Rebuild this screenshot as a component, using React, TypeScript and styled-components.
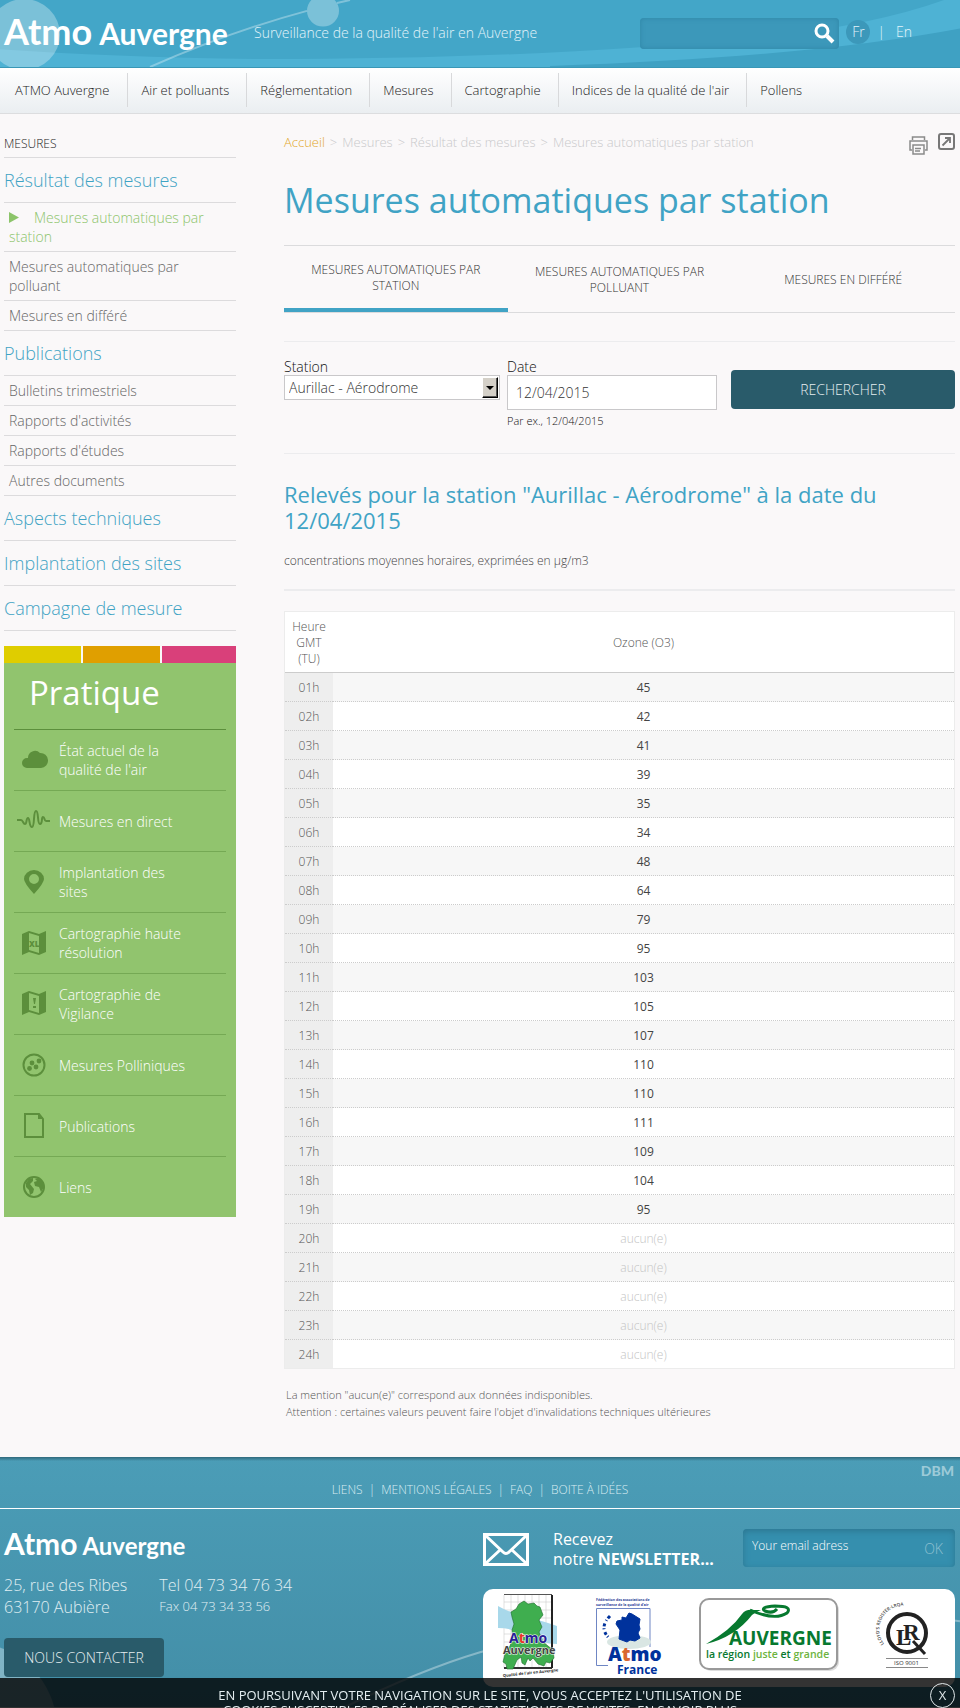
import React from "react";
import styled, { createGlobalStyle } from "styled-components";

const sans = `"Open Sans", "Noto Sans", sans-serif`;
const logoFont = `Lato, "Open Sans", sans-serif`;

const GlobalStyle = createGlobalStyle`
  * { box-sizing: border-box; }
  body { margin: 0; background: #faf8f9; color: #333; font-family: ${sans}; font-size: 14px; font-weight: 300; line-height: 19px; }
  a { color: inherit; text-decoration: none; }
  ul { list-style: none; margin: 0; padding: 0; }
  h1, h2, h3, p { margin: 0; font-weight: inherit; }
  button, input, select { font: inherit; }
  svg { overflow: visible; }
`;

/* ---------- header ---------- */
const Header = styled.header`
  position: relative;
  height: 68px;
  padding: 0 44px 4px 4px;
  display: flex;
  align-items: center;
  background: #43a6c8;
  border-bottom: 1px solid #3997b6;
  overflow: hidden;
`;
const Backdrop = styled.svg`
  position: absolute;
  inset: 0;
  width: 100%;
  height: 100%;
`;
const Logo = styled.a<{ $small?: boolean }>`
  position: relative;
  display: flex;
  align-items: baseline;
  gap: ${(p) => (p.$small ? 5 : 7)}px;
  width: ${(p) => (p.$small ? "auto" : "250px")};
  font-family: ${logoFont};
  font-weight: 700;
  font-size: ${(p) => (p.$small ? 24 : 30)}px;
  line-height: ${(p) => (p.$small ? 28 : 36)}px;
  color: #fff;
`;
const LogoMark = styled.span<{ $small?: boolean }>`
  font-size: ${(p) => (p.$small ? 30 : 36)}px;
`;
const Tagline = styled.p`
  position: relative;
  flex: 1;
  padding-top: 2px;
  color: #e3f4fa;
  line-height: 20px;
`;
const Search = styled.form`
  position: relative;
  display: flex;
  align-items: center;
  width: 199px;
  height: 31px;
  margin-top: 4px;
  border-radius: 4px;
  background: #3c98ba;
  box-shadow: inset 0 0 5px #2f86a6;
`;
const SearchInput = styled.input`
  flex: 1;
  min-width: 0;
  height: 31px;
  padding: 0 8px;
  border: 0;
  background: none;
  color: #fff;
`;
const IconButton = styled.button`
  display: flex;
  padding: 0 4px 0 0;
  border: 0;
  background: none;
`;
const Languages = styled.nav`
  position: relative;
  display: flex;
  align-items: center;
  gap: 7px;
  margin-left: 7px;
  color: #e3f4fa;
`;
const Lang = styled.a<{ $on?: boolean }>`
  width: 24px;
  line-height: 24px;
  border-radius: 12px;
  text-align: center;
  background: ${(p) => (p.$on ? "#3c98ba" : "none")};
`;

const MainNav = styled.nav`
  height: 46px;
  padding: 5px 1px;
  background: linear-gradient(#fff, #eaeef1);
  border-bottom: 1px solid #dcdddf;
  font-size: 13px;
  line-height: 34px;
  color: #222;
  ul { display: flex; }
  li { padding: 0 17px 0 13px; border-right: 1px solid #d8d9db; }
  li:first-child { padding: 0 18px 0 14px; }
  li:last-child { border-right: 0; }
`;

/* ---------- page ---------- */
const Page = styled.div`
  display: grid;
  grid-template-columns: 232px minmax(0, 1fr);
  column-gap: 48px;
  padding: 0 5px 37px 4px;
`;
const SideTitle = styled.h2`
  padding: 20px 0 3px;
  font-size: 12px;
  line-height: 20px;
  border-bottom: 1px solid #dcdbdd;
  color: #222;
`;
const SideHeading = styled.h3`
  padding: 10px 0;
  font-size: 18px;
  line-height: 24px;
  border-bottom: 1px solid #dcdbdd;
  color: #3fa3c4;
`;
const SideItem = styled.li<{ $active?: boolean }>`
  padding: 5px 20px 5px 5px;
  border-bottom: 1px solid #dcdbdd;
  color: ${(p) => (p.$active ? "#8cc46a" : "#666")};
  svg { margin-right: 15px; }
`;
const Strips = styled.div`
  display: grid;
  grid-template-columns: 77px 77px 1fr;
  gap: 2px;
  height: 17px;
  margin-top: 15px;
`;
const Strip = styled.span<{ $color: string }>`
  background: ${(p) => p.$color};
`;
const Practical = styled.section`
  padding: 0 10px;
  background: #91c46e;
  color: #fff;
`;
const PracticalTitle = styled.h2`
  padding: 9px 15px 16px;
  font-size: 33px;
  font-weight: 400;
  line-height: 41px;
  border-bottom: 1px solid #5c8f3c;
`;
const PracticalRow = styled.li`
  height: 61px;
  border-bottom: 1px solid #75a954;
  &:last-child { height: 60px; border-bottom: 0; }
  a { display: flex; align-items: center; gap: 5px; height: 60px; padding-right: 40px; }
  svg { flex: none; color: #5c8f3c; }
`;

const TopLine = styled.div`
  display: flex;
  justify-content: space-between;
  padding-top: 18px;
`;
const Crumbs = styled.nav`
  font-size: 13px;
  line-height: 20px;
  color: #c9c9cb;
  display: flex;
  gap: 5px;
`;
const CrumbHome = styled.a`
  color: #e3a82b;
`;
const Tools = styled.div`
  display: flex;
  align-items: flex-start;
  gap: 10px;
  padding-top: 1px;
  a { display: flex; }
  a:first-child { padding-top: 3px; }
`;
const Title = styled.h1`
  padding: 22px 0;
  font-size: 34px;
  font-weight: 400;
  line-height: 46px;
  color: #40a3c5;
`;
const Tabs = styled.nav`
  display: grid;
  grid-template-columns: repeat(3, 1fr);
  border: solid #dbdbdd;
  border-width: 1px 0;
`;
const Tab = styled.a<{ $active?: boolean }>`
  display: flex;
  align-items: center;
  justify-content: center;
  height: 66px;
  padding: 2px 20px 0;
  border-bottom: ${(p) => (p.$active ? "4px solid #40a3c5" : "0")};
  font-size: 12px;
  line-height: 16px;
  text-align: center;
  text-transform: uppercase;
  color: #333;
`;
const Filters = styled.form`
  display: flex;
  align-items: flex-start;
  gap: 7px;
  height: 113px;
  margin-top: 28px;
  padding-top: 16px;
  border: solid #ececee;
  border-width: 1px 0;
`;
const Field = styled.div<{ $grow: number }>`
  flex: ${(p) => p.$grow} 1 0;
  min-width: 0;
  label { display: block; line-height: 17px; color: #111; }
`;
const SelectBox = styled.div`
  position: relative;
  select {
    display: block;
    width: 100%;
    height: 25px;
    padding: 0 20px 0 4px;
    appearance: none;
    border: 1px solid #c9c8ca;
    border-radius: 0;
    background: #fff;
    color: #333;
  }
`;
const SelectArrow = styled.span`
  position: absolute;
  top: 2px;
  right: 2px;
  display: flex;
  align-items: center;
  justify-content: center;
  width: 16px;
  height: 21px;
  border: 1px solid;
  border-color: #fff #000 #000 #fff;
  box-shadow: inset -1px -1px #555;
  background: #d4d0c8;
  pointer-events: none;
`;
const DateInput = styled.input`
  display: block;
  width: 100%;
  height: 35px;
  padding: 0 8px;
  border: 1px solid #c9c8ca;
  color: #333;
`;
const Hint = styled.p`
  margin-top: 3px;
  font-size: 11px;
  line-height: 16px;
  color: #111;
`;
const DarkButton = styled.button`
  height: 39px;
  padding: 0;
  border: 0;
  border-radius: 4px;
  background: #295b6a;
  color: #e6eef0;
  text-transform: uppercase;
`;
const SearchButton = styled(DarkButton)`
  flex: 224 1 0;
  margin: 12px 0 0 7px;
`;
const Results = styled.section`
  padding-top: 27px;
`;
const ResultsTitle = styled.h2`
  font-size: 22px;
  line-height: 26px;
  font-weight: 400;
  color: #40a3c5;
`;
const Unit = styled.p`
  padding: 18px 0 19px;
  margin-bottom: 20px;
  border-bottom: 2px solid #ececee;
  font-size: 12px;
  color: #444;
`;
const DataTable = styled.table`
  width: 100%;
  border: 1px solid #ececec;
  border-bottom: 0;
  border-spacing: 0;
  background: #fff;
  font-size: 12px;
  line-height: 16px;
  text-align: center;
  th { font-weight: 300; color: #555; }
  th, td { padding: 7px 5px 5px; }
  thead th { height: 61px; border-bottom: 1px solid #ccc; }
  thead th:first-child { width: 48px; }
  tbody th { background: #eee; }
  tbody th, tbody td { height: 29px; border-bottom: 1px dotted #ccc; }
  tbody tr:nth-child(odd) td { background: #f7f7f7; }
  tbody tr:last-child > * { border-bottom: 1px solid #ececec; }
`;
const Value = styled.td<{ $empty: boolean }>`
  font-weight: ${(p) => (p.$empty ? 300 : 400)};
  color: ${(p) => (p.$empty ? "#c4c4c4" : "#444")};
`;
const Notes = styled.div`
  padding: 17px 2px 0;
  font-size: 11px;
  line-height: 17px;
  color: #555;
`;

/* ---------- footer ---------- */
const Footer = styled.footer`
  position: relative;
  overflow: hidden;
  background: linear-gradient(#4b9db7, #438ea7);
  color: #e0eff3;
  &::before {
    content: "";
    display: block;
    height: 4px;
    background: linear-gradient(#2f697c, transparent);
  }
`;
const FooterNav = styled.nav`
  position: relative;
  display: flex;
  justify-content: center;
  gap: 6px;
  padding: 19px 0 8px;
  border-bottom: 1px solid #fff;
  font-size: 12px;
  line-height: 20px;
  text-transform: uppercase;
  color: #d9ecf2;
`;
const Maker = styled.a`
  position: absolute;
  top: 1px;
  right: 6px;
  font-family: ${logoFont};
  font-weight: 900;
  font-size: 14px;
  line-height: 18px;
  color: #9ccad8;
`;
const FooterBody = styled.div`
  position: relative;
  display: flex;
  justify-content: space-between;
  padding: 20px 5px 20px 4px;
`;
const Contact = styled.div`
  display: flex;
  flex-direction: column;
  align-items: flex-start;
`;
const Address = styled.address`
  display: flex;
  gap: 32px;
  padding: 14px 0 20px;
  font-style: normal;
  font-size: 16px;
  line-height: 22px;
  small { display: block; font-size: 13px; line-height: 20px; }
`;
const ContactButton = styled(DarkButton)`
  width: 160px;
`;
const Partners = styled.div`
  width: 472px;
`;
const Newsletter = styled.form`
  display: flex;
  align-items: flex-start;
  height: 38px;
  svg { margin-top: 4px; }
`;
const NewsText = styled.label`
  flex: 1;
  margin-left: 24px;
  font-size: 16px;
  font-weight: 400;
  line-height: 20px;
  color: #fff;
`;
const MailBox = styled.div`
  display: flex;
  width: 212px;
  height: 38px;
  border-radius: 4px;
  background: #358fae;
  box-shadow: inset 0 2px 6px #2c7690;
  input {
    flex: 1;
    min-width: 0;
    height: 33px;
    padding: 0 9px;
    border: 0;
    background: none;
    font-size: 12px;
    color: #fff;
  }
  input::placeholder { color: #fff; opacity: 1; }
  button { padding: 0 12px 0 0; border: 0; background: none; color: #8fc0d1; }
`;
const PartnerCard = styled.ul`
  display: flex;
  justify-content: space-between;
  height: 98px;
  margin-top: 22px;
  padding: 5px 26px 0 15px;
  border-radius: 10px;
  background: #fff;
  li, a { display: flex; align-items: flex-start; }
`;
const CookieBar = styled.aside`
  position: fixed;
  left: 0;
  right: 0;
  bottom: 0;
  height: 30px;
  overflow: hidden;
  background: rgba(0, 0, 0, 0.8);
  color: #e4eef1;
  font-size: 13px;
  font-weight: 400;
  line-height: 15px;
  text-align: center;
  p { max-width: 540px; margin: 0 auto; padding-top: 10px; text-transform: uppercase; }
`;
const CloseButton = styled.button`
  position: absolute;
  top: 5px;
  right: 5px;
  width: 25px;
  height: 25px;
  padding: 0;
  border: 1px solid #dfe6e8;
  border-radius: 50%;
  background: none;
  color: #dfe6e8;
`;

/* ---------- drawings ---------- */
const HeaderArt = () => (
  <Backdrop viewBox="0 0 960 68" preserveAspectRatio="none" aria-hidden>
    <path d="M0 50Q110 58 260 60Q470 60 640 48Q840 38 944 0H960V68H0Z" fill="#4eb2d4" />
    <path d="M550 67Q810 58 960 29V68H550Z" fill="#3fa1c3" />
    <g fill="#fff" fillOpacity=".3">
      <circle cx="24" cy="35" r="36" />
      <circle cx="323" cy="11" r="16" />
    </g>
    <path d="M150 68Q230 32 307 11M337 3L350 0" stroke="#fff" strokeOpacity=".32" strokeWidth="2" fill="none" />
  </Backdrop>
);
const FooterArt = () => (
  <Backdrop viewBox="0 0 960 251" preserveAspectRatio="none" aria-hidden>
    <circle cx="-30" cy="273" r="87" fill="#fff" fillOpacity=".32" />
    <path d="M345 251Q420 214 480 196Q720 130 960 165" stroke="#fff" strokeOpacity=".35" strokeWidth="2" fill="none" />
  </Backdrop>
);

const icons: Record<string, React.ReactNode> = {
  cloud: <path fill="currentColor" d="M13 38a5 5 0 0 1 0-10h1a7 7 0 0 1 12-5 6 6 0 0 1 1 15z" />,
  wave: (
    <path
      d="M3 29h4c2 0 2 4 4 4s1-6 3-6 1 9 4 9 1-16 4-16 1 13 4 13 1-7 3-7 1 4 3 4h4"
      stroke="currentColor" strokeWidth="2" fill="none" strokeLinejoin="round" />
  ),
  pin: <path fill="currentColor" fillRule="evenodd" d="M20 42Q10 31 10 27a10 9 0 0 1 20 0q0 4-10 15zM20 22a5 5 0 1 0 0 10 5 5 0 0 0 0-10z" />,
  mapXl: (
    <g fill="currentColor">
      <path fillRule="evenodd" d="M8 21l7-3 10 3 7-3v21l-7 3-10-3-7 3zM15 20v17l10 3V23z" />
      <text x="15" y="34" fontFamily="Open Sans" fontWeight="800" fontSize="8">XL</text>
    </g>
  ),
  mapAlert: (
    <g fill="currentColor">
      <path fillRule="evenodd" d="M8 20l7-3 10 3 7-3v21l-7 3-10-3-7 3zM15 19v17l10 3V22z" />
      <path d="M19 24h3l-1 6h-1zM19 32h3v2h-3z" />
    </g>
  ),
  pollen: (
    <g fill="currentColor">
      <circle cx="20" cy="30" r="10.500" fill="none" stroke="currentColor" strokeWidth="2" />
      <circle cx="18" cy="28" r="2.400" /><circle cx="25" cy="26" r="2.400" />
      <circle cx="15.500" cy="33.500" r="2.400" /><circle cx="22" cy="32" r="2.400" />
    </g>
  ),
  page: (
    <g fill="none" stroke="currentColor" strokeWidth="2">
      <path d="M11 18h14l4 5v18H11z" /><path d="M25 18v4h4" />
    </g>
  ),
  globe: (
    <g fill="currentColor">
      <circle cx="20" cy="30" r="10" fill="none" stroke="currentColor" strokeWidth="2" />
      <path d="M12 26l3-4 4-1 0 3-3 3 4 5-1 4-3 2-1-5-3-3zM21 22l4-1 4 4 1 5-3 5-2-5-4-1-1-4 3-1z" />
    </g>
  ),
};
const RowIcon = ({ name }: { name: string }) => (
  <svg width="40" height="60" viewBox="0 0 40 60" aria-hidden>{icons[name]}</svg>
);

const AtmoAuvergneLogo = () => (
  <svg width="60" height="84" viewBox="0 0 60 84" role="img" aria-label="Atmo Auvergne">
    <path d="M6 1v73M13 1v73M20 1v73M27 1v73M34 1v73M41 1v73M48 1v73M6 8h49M6 16h49M6 24h49M6 32h49M6 40h49M6 48h49M6 56h49M6 64h49" stroke="#ccc" strokeWidth=".6" />
    <path d="M0 12Q10 18 29 23T59 32V50Q43 50 29 42T0 34Z" fill="#a8d8ea" />
    <path d="M6 .5h48" stroke="#555" /><path d="M6 74h48" stroke="#333" strokeWidth="2" /><path d="M54 1v73" stroke="#222" strokeWidth="2" />
    <path d="M13 18l5-3 3-5 5-3 4 3 6-1 3 3 3 1 3 8-4 5 3 7-3 5 4 10 10 8 1 8-4 5-4-1-2 4-6-2-5-6-3 3-2-3-3 7-3-2-1-6-4 3-4 9-6 0-1-5-3-2 2-8 5-8 3-8-1-8 2-6-2-7z" fill="#3fae4f" stroke="#1e6b2c" strokeWidth=".6" />
    <g fontFamily="Open Sans" fontWeight="700" stroke="#fff" strokeWidth="1" paintOrder="stroke">
      <text x="11" y="49" fontSize="14" fill="#2a1f96">A<tspan fill="#e8352b">t</tspan>mo</text>
      <text x="5" y="60" fontSize="11" fill="#444">Auvergne</text>
    </g>
    <text x="5" y="83" fontFamily="Open Sans" fontWeight="700" fontSize="4" fill="#222" transform="rotate(-6 5 83)">Qualité de l'air en Auvergne</text>
  </svg>
);
const AtmoFranceLogo = () => (
  <svg width="64" height="84" viewBox="0 0 64 84" role="img" aria-label="Atmo France">
    <g fontFamily="Open Sans" fontWeight="700" fill="#2a3d96" fontSize="3.500">
      <text x="0" y="7">Fédération des associations de</text>
      <text x="0" y="12">surveillance de la qualité d'air</text>
    </g>
    <path d="M54 53V14.500H.5v57H12" fill="none" stroke="#6f86c4" />
    <ellipse cx="33" cy="48" rx="22" ry="7" fill="#d9e6e3" />
    <path d="M21 27l5-1 0-3 4 1 3-5 3 1 8 5-1 6 1 4-2 4 2 5-5 3-5-1-3 2-8-3 1-9-4-6z" fill="#00329c" stroke="#00329c" />
    <path d="M14 22q-12 12 0 23" fill="none" stroke="#00329c" strokeWidth="3" strokeDasharray="3 2 1 3" />
    <g fontFamily="Open Sans" fontWeight="800" fill="#00329c">
      <text x="12" y="67" fontSize="19">A<tspan fill="#d9682f">t</tspan>mo</text>
      <text x="21" y="80" fontSize="12" fontWeight="700">France</text>
    </g>
  </svg>
);
const RegionLogo = () => (
  <svg width="142" height="80" viewBox="0 0 142 80" role="img" aria-label="Auvergne, la région juste et grande">
    <rect x="3" y="7" width="137" height="70" rx="9" fill="#ddd" />
    <rect x="1" y="5" width="137" height="70" rx="9" fill="#fff" stroke="#999" strokeWidth="2" />
    <path d="M7 50Q32 36 43 20Q47 15 54 16H62Q56 18 53 21Q36 43 7 50Z" fill="#07792f" />
    <path d="M51 16Q76 27 88 19Q94 12 76 12Q60 13 66 17Q74 20 78 15" fill="none" stroke="#07792f" strokeWidth="3" />
    <g fontFamily="Open Sans" fill="#07792f">
      <text x="30" y="51" fontSize="19" fontWeight="700">AUVERGNE</text>
      <text x="7" y="64" fontSize="10.500" fontWeight="600">la région <tspan fill="#6cb33e">juste</tspan> et <tspan fill="#6cb33e">grande</tspan></text>
    </g>
  </svg>
);
const IsoLogo = () => (
  <svg width="50" height="80" viewBox="0 0 50 80" role="img" aria-label="ISO 9001">
    <defs><path id="isoArc" d="M5 50A24 24 0 0 1 38 16" /></defs>
    <text fontFamily="Open Sans" fontWeight="600" fontSize="4.500" fill="#444"><textPath href="#isoArc">LLOYD'S REGISTER-LRQA</textPath></text>
    <circle cx="28" cy="39" r="19" fill="none" stroke="#222" strokeWidth="4" />
    <path d="M34 47l12 13" stroke="#222" strokeWidth="3" />
    <g fontFamily="Liberation Serif" fontWeight="700" fill="#222">
      <text x="17" y="51" fontSize="23">L</text><text x="24" y="46" fontSize="23">R</text>
    </g>
    <path d="M7 64.500h42M7 73.500h42" stroke="#888" />
    <text x="15" y="71" fontFamily="Open Sans" fontSize="6" fontWeight="400" fill="#333">ISO 9001</text>
  </svg>
);

/* ---------- content ---------- */
const menu = ["ATMO Auvergne", "Air et polluants", "Réglementation", "Mesures", "Cartographie", "Indices de la qualité de l'air", "Pollens"];
const sections: { title: string; items: string[] }[] = [
  { title: "Résultat des mesures", items: ["Mesures automatiques par station", "Mesures automatiques par polluant", "Mesures en différé"] },
  { title: "Publications", items: ["Bulletins trimestriels", "Rapports d'activités", "Rapports d'études", "Autres documents"] },
  { title: "Aspects techniques", items: [] },
  { title: "Implantation des sites", items: [] },
  { title: "Campagne de mesure", items: [] },
];
const practical: [string, string][] = [
  ["cloud", "État actuel de la qualité de l'air"], ["wave", "Mesures en direct"], ["pin", "Implantation des sites"],
  ["mapXl", "Cartographie haute résolution"], ["mapAlert", "Cartographie de Vigilance"], ["pollen", "Mesures Polliniques"],
  ["page", "Publications"], ["globe", "Liens"],
];
const ozone = [45, 42, 41, 39, 35, 34, 48, 64, 79, 95, 103, 105, 107, 110, 110, 111, 109, 104, 95, null, null, null, null, null];
const footerLinks = ["Liens", "Mentions légales", "FAQ", "Boite à idées"];

const BrandLogo = ({ small }: { small?: boolean }) => (
  <Logo href="#" $small={small}><LogoMark $small={small}>Atmo</LogoMark>Auvergne</Logo>
);

export default function App() {
  return (
    <>
      <GlobalStyle />
      <Header>
        <HeaderArt />
        <BrandLogo />
        <Tagline>Surveillance de la qualité de l'air en Auvergne</Tagline>
        <Search>
          <SearchInput type="search" aria-label="Rechercher" />
          <IconButton type="button" aria-label="Lancer la recherche">
            <svg width="21" height="21" viewBox="0 0 21 21" fill="none" stroke="#fff">
              <circle cx="8" cy="8" r="6" strokeWidth="3" /><path d="M13 13l6 6" strokeWidth="4" />
            </svg>
          </IconButton>
        </Search>
        <Languages aria-label="Langue"><Lang href="#" $on>Fr</Lang>|<Lang href="#">En</Lang></Languages>
      </Header>
      <MainNav>
        <ul>{menu.map((m) => <li key={m}><a href="#">{m}</a></li>)}</ul>
      </MainNav>
      <Page>
        <aside>
          <SideTitle>MESURES</SideTitle>
          {sections.map((s, i) => (
            <React.Fragment key={s.title}>
              <SideHeading><a href="#">{s.title}</a></SideHeading>
              <ul>
                {s.items.map((t, j) => {
                  const active = i === 0 && j === 0;
                  return (
                    <SideItem key={t} $active={active}>
                      {active && <svg width="10" height="11" viewBox="0 0 10 11" aria-hidden><path d="M0 0l10 5.500L0 11z" fill="#8cc46a" /></svg>}
                      <a href="#">{t}</a>
                    </SideItem>
                  );
                })}
              </ul>
            </React.Fragment>
          ))}
          <Strips><Strip $color="#dfcd00" /><Strip $color="#e09f00" /><Strip $color="#d9407a" /></Strips>
          <Practical>
            <PracticalTitle>Pratique</PracticalTitle>
            <ul>{practical.map(([icon, t]) => <PracticalRow key={t}><a href="#"><RowIcon name={icon} />{t}</a></PracticalRow>)}</ul>
          </Practical>
        </aside>
        <main>
          <TopLine>
            <Crumbs>
              <CrumbHome href="#">Accueil</CrumbHome><span>&gt;</span><a href="#">Mesures</a><span>&gt;</span>
              <a href="#">Résultat des mesures</a><span>&gt;</span><span>Mesures automatiques par station</span>
            </Crumbs>
            <Tools>
              <a href="#" aria-label="Imprimer">
                <svg width="19" height="19" viewBox="0 0 19 19" fill="none" stroke="#8a8a8a">
                  <path d="M3.500 4V1h12v3M3 14H1V5h17v9h-2" strokeWidth="1.500" />
                  <path d="M4 9h11v9H4zM6 12.500h6M6 15h5" strokeWidth="1.500" />
                </svg>
              </a>
              <a href="#" aria-label="Partager">
                <svg width="17" height="17" viewBox="0 0 17 17" fill="none" stroke="#777" strokeWidth="2">
                  <rect x="1" y="1" width="15" height="15" rx="2" /><path d="M4.500 12.500L12 5M7 5h5v5" strokeWidth="1.800" />
                </svg>
              </a>
            </Tools>
          </TopLine>
          <Title>Mesures automatiques par station</Title>
          <Tabs>
            <Tab href="#" $active>Mesures automatiques par station</Tab>
            <Tab href="#">Mesures automatiques par polluant</Tab>
            <Tab href="#">Mesures en différé</Tab>
          </Tabs>
          <Filters>
            <Field $grow={216}>
              <label htmlFor="station">Station</label>
              <SelectBox>
                <select id="station"><option>Aurillac - Aérodrome</option></select>
                <SelectArrow><svg width="8" height="4" viewBox="0 0 8 4"><path d="M0 0h8L4 4z" /></svg></SelectArrow>
              </SelectBox>
            </Field>
            <Field $grow={210}>
              <label htmlFor="date">Date</label>
              <DateInput id="date" defaultValue="12/04/2015" />
              <Hint>Par ex., 12/04/2015</Hint>
            </Field>
            <SearchButton type="button">Rechercher</SearchButton>
          </Filters>
          <Results>
            <ResultsTitle>Relevés pour la station "Aurillac - Aérodrome" à la date du 12/04/2015</ResultsTitle>
            <Unit>concentrations moyennes horaires, exprimées en µg/m3</Unit>
            <DataTable>
              <thead><tr><th scope="col">Heure GMT (TU)</th><th scope="col">Ozone (O3)</th></tr></thead>
              <tbody>
                {ozone.map((v, i) => (
                  <tr key={i}>
                    <th scope="row">{String(i + 1).padStart(2, "0")}h</th>
                    <Value $empty={v === null}>{v ?? "aucun(e)"}</Value>
                  </tr>
                ))}
              </tbody>
            </DataTable>
            <Notes>
              <p>La mention "aucun(e)" correspond aux données indisponibles.</p>
              <p>Attention : certaines valeurs peuvent faire l'objet d'invalidations techniques ultérieures</p>
            </Notes>
          </Results>
        </main>
      </Page>
      <Footer>
        <FooterArt />
        <FooterNav>
          {footerLinks.map((l, i) => <React.Fragment key={l}>{i > 0 && <span>|</span>}<a href="#">{l}</a></React.Fragment>)}
          <Maker href="#">DBM</Maker>
        </FooterNav>
        <FooterBody>
          <Contact>
            <BrandLogo small />
            <Address>
              <div>25, rue des Ribes<br />63170 Aubière</div>
              <div>Tel 04 73 34 76 34<small>Fax 04 73 34 33 56</small></div>
            </Address>
            <ContactButton type="button">Nous contacter</ContactButton>
          </Contact>
          <Partners>
            <Newsletter>
              <svg width="46" height="33" viewBox="0 0 46 33" fill="none" stroke="#fff" strokeWidth="3" aria-hidden>
                <path d="M1.500 1.500h43v30h-43z" /><path d="M2 2l18 17q3 3 6 0L44 2M2 31l15-14M44 31L29 17" />
              </svg>
              <NewsText htmlFor="email">Recevez<br />notre <b>NEWSLETTER...</b></NewsText>
              <MailBox><input id="email" type="email" placeholder="Your email adress" /><button type="button">OK</button></MailBox>
            </Newsletter>
            <PartnerCard>
              <li><a href="#"><AtmoAuvergneLogo /></a></li>
              <li><a href="#"><AtmoFranceLogo /></a></li>
              <li><a href="#"><RegionLogo /></a></li>
              <li><a href="#"><IsoLogo /></a></li>
            </PartnerCard>
          </Partners>
        </FooterBody>
      </Footer>
      <CookieBar>
        <p>En poursuivant votre navigation sur le site, vous acceptez l'utilisation de cookies susceptibles de réaliser des statistiques de visites. En savoir plus</p>
        <CloseButton type="button" aria-label="Fermer">X</CloseButton>
      </CookieBar>
    </>
  );
}
